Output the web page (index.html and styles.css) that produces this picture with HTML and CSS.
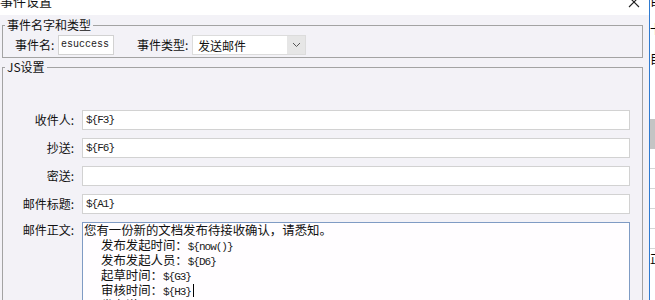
FILE: index.html
```html
<!DOCTYPE html>
<html lang="zh">
<head>
<meta charset="utf-8">
<title>事件设置</title>
<link rel="stylesheet" href="styles.css">
</head>
<body>
<div class="window">
  <div class="titlebar">
    <div class="title">事件设置</div>
    <svg class="close" width="12" height="12" viewBox="0 0 12 12"><path d="M1 0 L11 10 M11 0 L1 10" stroke="#222" stroke-width="1.1" fill="none"/></svg>
  </div>
  <fieldset class="group g-name">
    <legend>事件名字和类型</legend>
    <div class="namerow">
      <span class="nlabel">事件名:</span>
      <div class="box nameinput"><span class="mono">esuccess</span></div>
      <span class="tlabel">事件类型:</span>
      <div class="box select">
        <span class="seltext">发送邮件</span>
        <span class="selbtn"><svg width="9" height="6" viewBox="0 0 9 6"><path d="M1 1 L4.5 4.5 L8 1" stroke="#555" stroke-width="1" fill="none"/></svg></span>
      </div>
    </div>
  </fieldset>
  <fieldset class="group g-js">
    <legend>JS设置</legend>
    <div class="form">
      <div class="frow"><span class="flabel">收件人:</span><div class="box field"><span class="mono">${F3}</span></div></div>
      <div class="frow"><span class="flabel">抄送:</span><div class="box field"><span class="mono">${F6}</span></div></div>
      <div class="frow"><span class="flabel">密送:</span><div class="box field"></div></div>
      <div class="frow"><span class="flabel">邮件标题:</span><div class="box field"><span class="mono">${A1}</span></div></div>
      <div class="frow top"><span class="flabel">邮件正文:</span>
        <div class="area">
          <div class="line">您有一份新的文档发布待接收确认，请悉知。</div>
          <div class="line ind">发布发起时间：<span class="mono">${now()}</span></div>
          <div class="line ind">发布发起人员：<span class="mono">${D6}</span></div>
          <div class="line ind">起草时间：<span class="mono">${G3}</span></div>
          <div class="line ind">审核时间：<span class="mono">${H3}</span><span class="caret"></span></div>
          <div class="line ind">发布说明：<span class="mono">${I3}</span></div>
        </div>
      </div>
    </div>
  </fieldset>
</div>
<div class="edge"></div>
<div class="side">
  <div class="sg sg1">目</div>
  <div class="sg sg2">卡</div>
  <div class="sg sg3">目</div>
  <div class="sblock"></div>
  <div class="sline"></div>
  <div class="sline"></div>
  <div class="sline"></div>
  <div class="sline"></div>
  <div class="sline"></div>
  <div class="sg sg4">正</div>
</div>
</body>
</html>
```

FILE: styles.css
```css
html, body {
  margin: 0;
  padding: 0;
}
body {
  width: 655px;
  height: 300px;
  overflow: hidden;
  display: flex;
  font-family: "Noto Sans CJK SC", "Noto Sans", sans-serif;
  font-size: 12px;
  color: #111;
  background: #fff;
}
.window {
  width: 649px;
  flex: none;
  background: #f3f2f7;
  overflow: hidden;
}
.titlebar {
  height: 15px;
  background: #fff;
  display: flex;
  justify-content: space-between;
  align-items: flex-start;
  overflow: hidden;
}
.title {
  font-size: 13px;
  line-height: 16px;
  margin-top: -7px;
}
.close {
  margin-top: -3px;
  margin-right: 9px;
}
.group {
  border: 1px solid #a3a3a3;
  padding: 0;
  margin: 3px 6px 0 2px;
  min-width: 0;
}
.group legend {
  margin-left: 2px;
  padding: 0 2px;
  font-size: 12px;
  line-height: 14px;
}
.g-js {
  margin-top: 2px;
  height: 400px;
}
.namerow {
  display: flex;
  align-items: center;
  height: 20px;
  margin: 3px 0 2px;
  padding-left: 12px;
}
.nlabel {
  width: 43px;
  line-height: 20px;
}
.box {
  box-sizing: border-box;
  height: 20px;
  background: #fff;
  border: 1px solid #d2d2d2;
  display: flex;
  align-items: center;
}
.nameinput {
  width: 56px;
  padding-left: 2px;
}
.tlabel {
  margin-left: 23px;
  width: 55px;
  line-height: 20px;
}
.select {
  width: 114px;
  border-color: #dcdcdc;
}
.seltext {
  flex: 1;
  padding-left: 5px;
  font-size: 12px;
}
.selbtn {
  width: 18px;
  height: 18px;
  background: #e6e6e6;
  display: flex;
  align-items: center;
  justify-content: center;
}
.mono {
  font-family: "Liberation Mono", "DejaVu Sans Mono", monospace;
  font-size: 11px;
  line-height: 10px;
  letter-spacing: -1px;
  color: #1a1a1a;
}
.nameinput .mono {
  font-size: 10px;
  letter-spacing: 0;
}
.form {
  padding: 36px 12px 0 0;
}
.frow {
  display: flex;
  align-items: center;
  margin-bottom: 8px;
}
.frow.top {
  align-items: flex-start;
}
.flabel {
  width: 71px;
  flex: none;
  text-align: right;
  line-height: 20px;
}
.frow.top .flabel {
  line-height: 15px;
}
.field {
  flex: 1;
  margin-left: 8px;
  padding-left: 3px;
}
.area {
  flex: 1;
  margin-left: 8px;
  height: 120px;
  border: 1px solid #7f9bc4;
  background: #fffdff;
  padding-left: 1px;
  font-size: 12.4px;
  line-height: 15px;
}
.line {
  white-space: nowrap;
  height: 15px;
}
.line.ind {
  padding-left: 17px;
}
.caret {
  display: inline-block;
  width: 1px;
  height: 13px;
  background: #000;
  margin-left: 2px;
  vertical-align: -2px;
}
.edge {
  width: 1px;
  flex: none;
  background: #2f7bd1;
}
.side {
  width: 5px;
  flex: none;
  background: #fff;
  overflow: hidden;
  display: flex;
  flex-direction: column;
}
.sg {
  font-size: 12px;
  line-height: 12px;
  white-space: nowrap;
  color: #000;
}
.sg1 { margin-top: -5px; }
.sg2 { margin-top: 16px; }
.sg3 { margin-top: 18px; }
.sblock {
  margin-top: 54px;
  height: 30px;
  background: #c4c4c4;
}
.sline {
  margin-top: 19px;
  height: 1px;
  background: #d6d6d6;
}
.sg4 { margin-top: 4px; }
```
